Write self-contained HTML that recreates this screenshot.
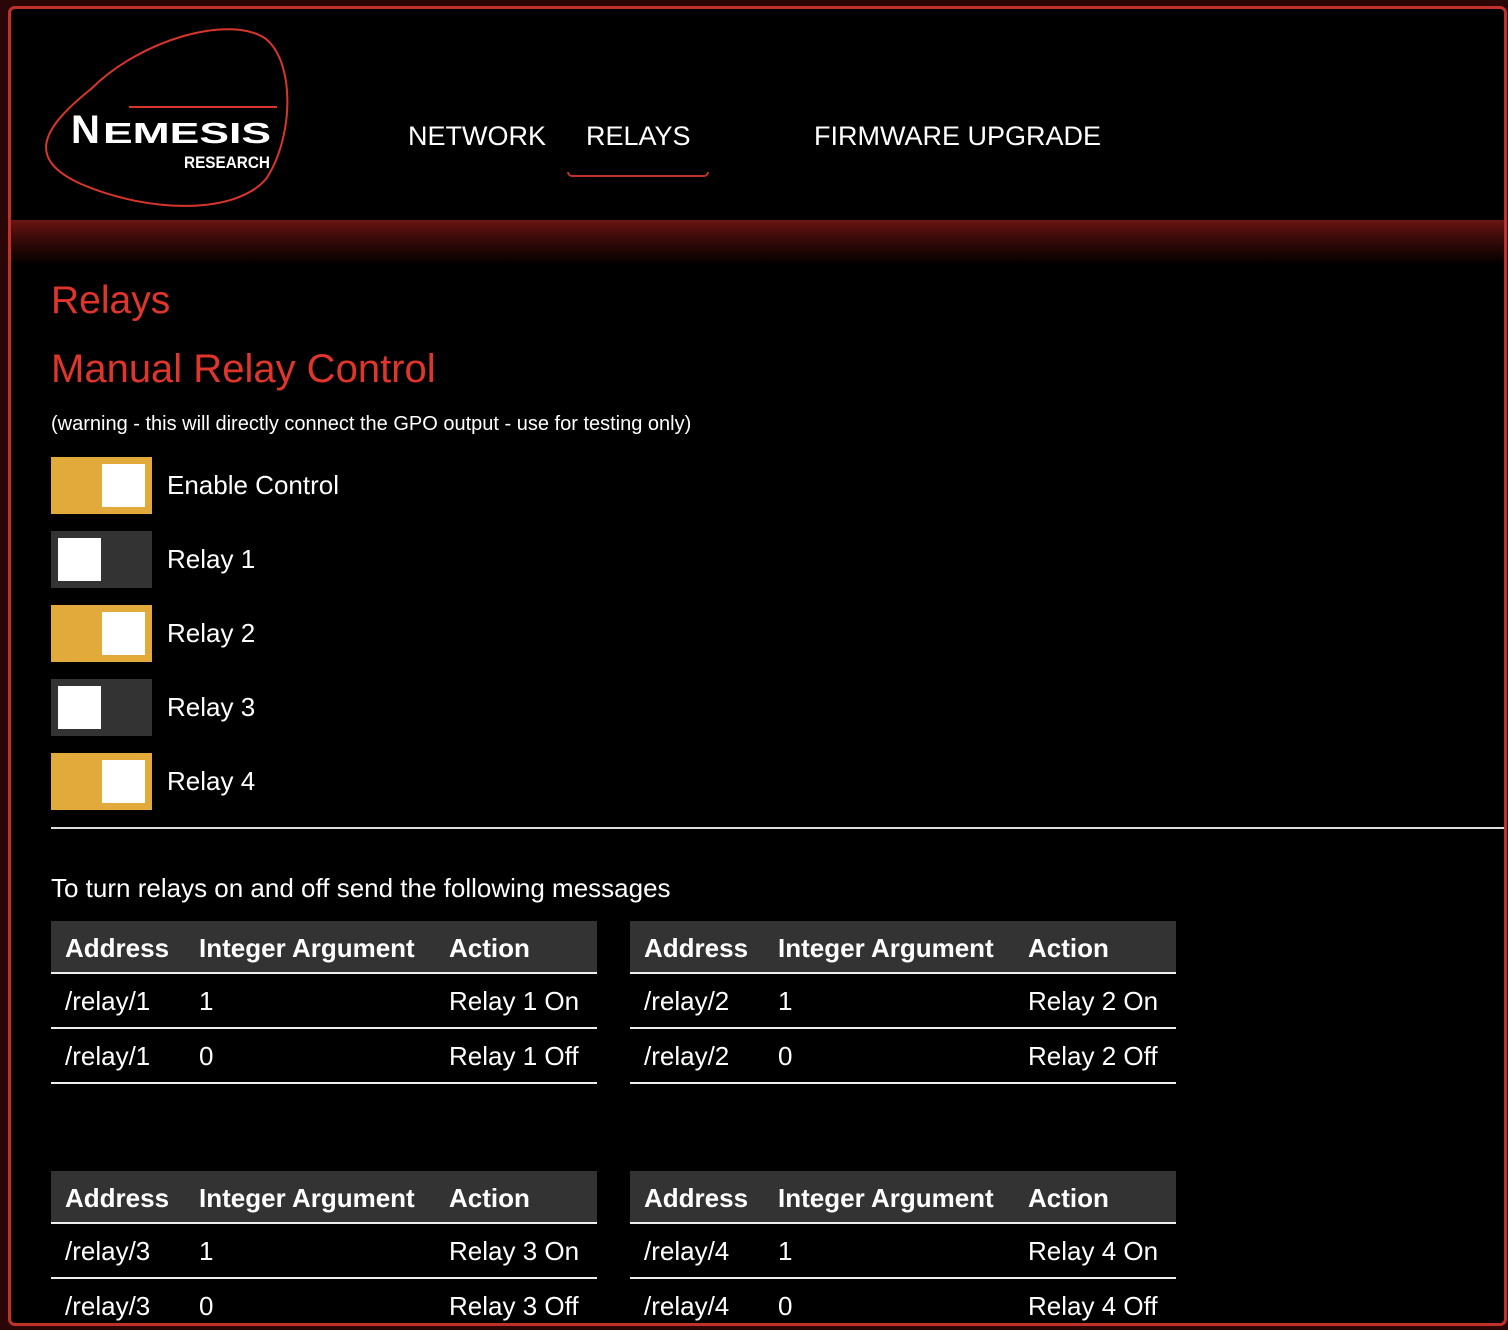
<!DOCTYPE html>
<html><head><meta charset="utf-8">
<style>
*{margin:0;padding:0;box-sizing:border-box}
body{width:1508px;height:1330px;background:#2a0706;font-family:"Liberation Sans",Arial,sans-serif;color:#fff;position:relative;overflow:hidden}
#box{position:absolute;left:8px;top:6px;width:1499px;height:1320px;background:#000;border:3px solid #c2302a;border-radius:7px;overflow:hidden}
.abs{position:absolute}
.band{position:absolute;left:0;top:211px;width:100%;height:45px;background:linear-gradient(#6a1512,#3a0b09 40%,#000)}
.nav{position:absolute;top:112px;font-size:27px;color:#fff}
h1{position:absolute;left:40px;top:270px;font-size:39px;font-weight:normal;color:#e0352b}
h2{position:absolute;left:40px;top:338px;font-size:40px;font-weight:normal;color:#e0352b}
.warn{position:absolute;left:40px;top:404px;font-size:20px}
.tg{position:absolute;left:40px;width:101px;height:57px}
.tg.on{background:#e2a93b}.tg.off{background:#333}
.tg i{position:absolute;top:7px;width:43px;height:43px;background:#fff}
.tg.on i{left:51px}.tg.off i{left:7px}
.lbl{position:absolute;left:156px;font-size:26px}
.hr{position:absolute;left:40px;top:818px;width:1460px;height:2px;background:#ddd}
.msg{position:absolute;left:40px;top:864px;font-size:26px}
.t{position:absolute;width:546px;font-size:26px}
.t .h{height:53px;background:#333;font-weight:bold;border-bottom:2px solid #eee;position:relative}
.t .r{height:55px;border-bottom:2px solid #eee;position:relative}
.t span{position:absolute;top:12px}
.t .r span{top:12px}
.c1{left:14px}.c2{left:148px}.c3{left:398px}
</style></head><body>
<div id="box">
<svg class="abs" style="left:20px;top:10px" width="260" height="190" viewBox="0 0 260 190">
<path d="M60 70 C110 20 200 -5 235 20 C265 45 262 120 235 160 C205 195 120 195 50 165 C-5 140 10 110 60 70 Z" fill="none" stroke="#d9362a" stroke-width="2"/>
<line x1="98" y1="88" x2="246" y2="88" stroke="#d9362a" stroke-width="2"/>
<text x="40" y="124" font-family="Liberation Sans" font-weight="bold" font-size="40" fill="#fff">N</text>
<text x="72" y="124" font-family="Liberation Sans" font-weight="bold" font-size="29" fill="#fff" textLength="168" lengthAdjust="spacingAndGlyphs">EMESIS</text>
<text x="153" y="149" font-family="Liberation Sans" font-weight="bold" font-size="17" fill="#fff" textLength="86" lengthAdjust="spacingAndGlyphs">RESEARCH</text>
</svg>
<div class="nav" style="left:397px">NETWORK</div>
<div class="nav" style="left:575px">RELAYS</div>
<div class="abs" style="left:556px;top:163px;width:142px;height:5px;border:2px solid #c0302a;border-top:none;border-radius:0 0 5px 5px"></div>
<div class="nav" style="left:803px">FIRMWARE UPGRADE</div>
<div class="band"></div>
<h1>Relays</h1>
<h2>Manual Relay Control</h2>
<div class="warn">(warning - this will directly connect the GPO output - use for testing only)</div>
<div class="tg on" style="top:448px"><i></i></div><div class="lbl" style="top:461px">Enable Control</div>
<div class="tg off" style="top:522px"><i></i></div><div class="lbl" style="top:535px">Relay 1</div>
<div class="tg on" style="top:596px"><i></i></div><div class="lbl" style="top:609px">Relay 2</div>
<div class="tg off" style="top:670px"><i></i></div><div class="lbl" style="top:683px">Relay 3</div>
<div class="tg on" style="top:744px"><i></i></div><div class="lbl" style="top:757px">Relay 4</div>
<div class="hr"></div>
<div class="msg">To turn relays on and off send the following messages</div>

<div class="t" style="left:40px;top:912px">
<div class="h"><span class="c1">Address</span><span class="c2">Integer Argument</span><span class="c3">Action</span></div>
<div class="r"><span class="c1">/relay/1</span><span class="c2">1</span><span class="c3">Relay 1 On</span></div>
<div class="r"><span class="c1">/relay/1</span><span class="c2">0</span><span class="c3">Relay 1 Off</span></div>
</div>
<div class="t" style="left:619px;top:912px">
<div class="h"><span class="c1">Address</span><span class="c2">Integer Argument</span><span class="c3">Action</span></div>
<div class="r"><span class="c1">/relay/2</span><span class="c2">1</span><span class="c3">Relay 2 On</span></div>
<div class="r"><span class="c1">/relay/2</span><span class="c2">0</span><span class="c3">Relay 2 Off</span></div>
</div>
<div class="t" style="left:40px;top:1162px">
<div class="h"><span class="c1">Address</span><span class="c2">Integer Argument</span><span class="c3">Action</span></div>
<div class="r"><span class="c1">/relay/3</span><span class="c2">1</span><span class="c3">Relay 3 On</span></div>
<div class="r"><span class="c1">/relay/3</span><span class="c2">0</span><span class="c3">Relay 3 Off</span></div>
</div>
<div class="t" style="left:619px;top:1162px">
<div class="h"><span class="c1">Address</span><span class="c2">Integer Argument</span><span class="c3">Action</span></div>
<div class="r"><span class="c1">/relay/4</span><span class="c2">1</span><span class="c3">Relay 4 On</span></div>
<div class="r"><span class="c1">/relay/4</span><span class="c2">0</span><span class="c3">Relay 4 Off</span></div>
</div>
</div>
</body></html>
